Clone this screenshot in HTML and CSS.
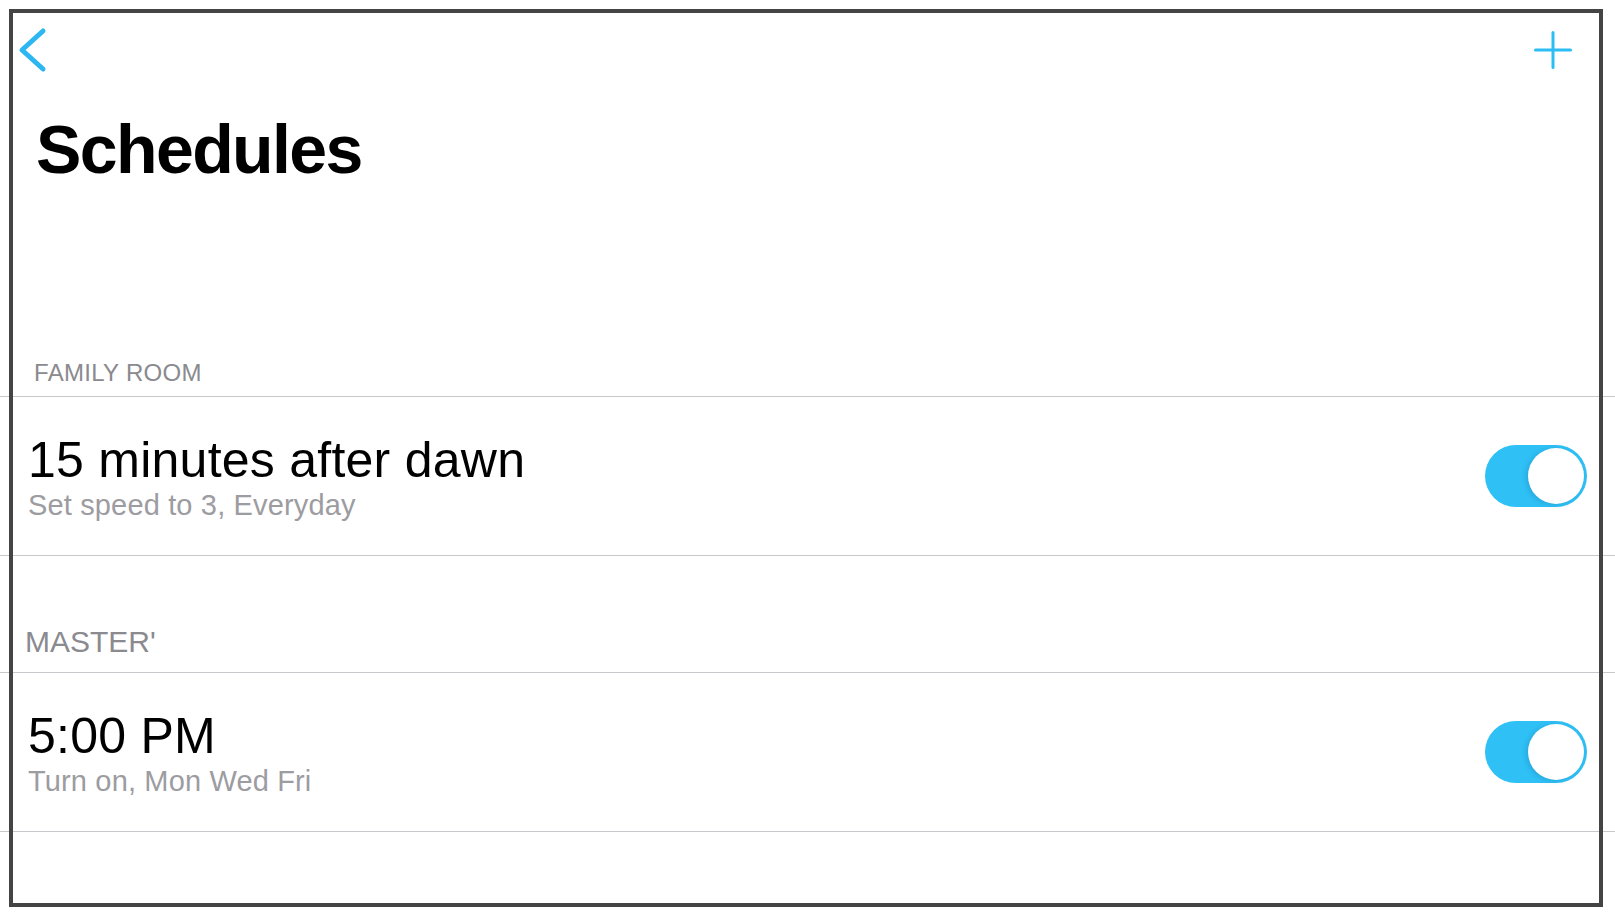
FILE: index.html
```html
<!DOCTYPE html>
<html lang="en">
<head>
  <meta charset="UTF-8">
  <meta name="viewport" content="width=device-width, initial-scale=1.0">
  <title>Schedules</title>
  <link rel="stylesheet" href="styles.css">
</head>
<body>
  <div class="screen">
    <nav class="nav">
      <a class="nav-btn" href="#" aria-label="Back">
        <svg width="30" height="46" viewBox="0 0 30 46">
          <polyline points="25,4 4,23 25,42" fill="none" stroke="#2cb6f2" stroke-width="5" stroke-linecap="round" stroke-linejoin="round"/>
        </svg>
      </a>
      <a class="nav-btn" href="#" aria-label="Add schedule">
        <svg width="40" height="40" viewBox="0 0 40 40">
          <path d="M20 2.5V37.5M2.5 20H37.5" stroke="#2cbdf4" stroke-width="3" stroke-linecap="round"/>
        </svg>
      </a>
    </nav>

    <h1 class="title">Schedules</h1>

    <section class="group group-first">
      <div class="group-label label-family">FAMILY ROOM</div>
      <div class="rows">
        <div class="row">
          <div class="row-text">
            <div class="row-title">15 minutes after dawn</div>
            <div class="row-sub">Set speed to 3, Everyday</div>
          </div>
          <span class="toggle on"><span class="knob"></span></span>
        </div>
      </div>
    </section>

    <section class="group">
      <div class="group-label label-master">MASTER'</div>
      <div class="rows">
        <div class="row">
          <div class="row-text">
            <div class="row-title">5:00 PM</div>
            <div class="row-sub">Turn on, Mon Wed Fri</div>
          </div>
          <span class="toggle on"><span class="knob"></span></span>
        </div>
      </div>
    </section>
  </div>
</body>
</html>
```

FILE: styles.css
```css
body {
  margin: 0;
  background-color: #fff;
  font-family: 'Liberation Sans', Arial, sans-serif;
  color: #000;
}
.screen {
  position: relative;
  height: 918px;
  overflow: hidden;
}
/* device frame drawn over the content */
.screen::after {
  content: '';
  position: absolute;
  top: 9px;
  left: 9px;
  width: 1594px;
  height: 898px;
  box-sizing: border-box;
  border: 4px solid #444;
  pointer-events: none;
}
.nav {
  display: flex;
  justify-content: space-between;
  align-items: center;
  height: 46px;
  margin-top: 27px;
  padding: 0 42px 0 18px;
}
.nav-btn {
  display: flex;
}
.title {
  margin: 42px 0 0 36px;
  font-size: 68px;
  line-height: 68px;
  font-weight: bold;
  letter-spacing: -1.6px;
}
.group-first {
  margin-top: 176px;
}
.group + .group {
  margin-top: 69px;
}
.group-label {
  color: #8a8a8f;
}
.label-family {
  padding: 0 0 9px 34px;
  font-size: 24px;
  line-height: 28px;
  letter-spacing: 0.3px;
}
.label-master {
  padding: 0 0 13px 25px;
  font-size: 30px;
  line-height: 34px;
}
.rows {
  border-top: 1px solid #c8c7cc;
}
.row {
  display: flex;
  align-items: center;
  justify-content: space-between;
  height: 158px;
  padding: 0 28px 0 28px;
  border-bottom: 1px solid #c8c7cc;
}
.row-text {
  padding-top: 2px;
}
.row-title {
  font-size: 50px;
  line-height: 56px;
  letter-spacing: 0.25px;
}
.row-sub {
  font-size: 29px;
  line-height: 34px;
  letter-spacing: 0.15px;
  color: #9c9ca1;
}
.toggle {
  position: relative;
  width: 102px;
  height: 62px;
  border-radius: 31px;
  background-color: #2fc0f5;
}
.knob {
  position: absolute;
  top: 3px;
  right: 3px;
  width: 56px;
  height: 56px;
  border-radius: 50%;
  background-color: #fff;
  box-shadow: -2px 1px 5px rgba(0, 60, 110, 0.18);
}
```
